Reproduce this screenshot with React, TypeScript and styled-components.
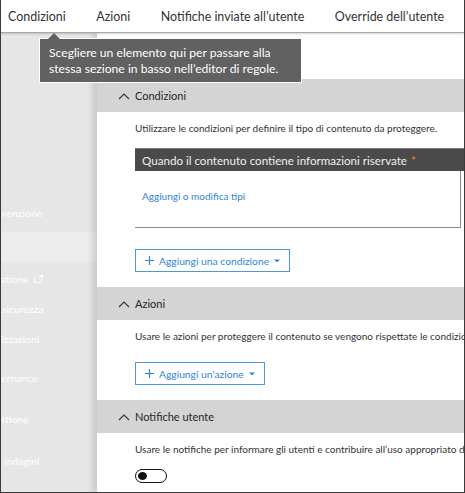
import React from "react";
import styled, { createGlobalStyle } from "styled-components";

const Global = createGlobalStyle`
  html, body { margin: 0; padding: 0; background: #fff; }
  body { font-family: Lato, "Open Sans", sans-serif; }
  * { box-sizing: border-box; }
`;

const Frame = styled.div`
  position: relative;
  width: 465px;
  height: 493px;
  border-left: 1px solid #3a3a3a;
  border-right: 1px solid #3a3a3a;
  border-bottom: 1px solid #3a3a3a;
  display: flex;
  flex-direction: column;
  overflow: hidden;
  background: #fff;
`;

const TabBar = styled.nav`
  height: 33px;
  flex: none;
  display: flex;
  align-items: center;
  gap: 30.5px;
  padding-left: 7px;
  border-bottom: 1px solid #a8a8a8;
  box-shadow: 0 1px 2px rgba(0, 0, 0, 0.18);
  position: relative;
  z-index: 2;
  background: #fff;
`;

const Tab = styled.span`
  font-size: 12.45px;
  color: #333;
  white-space: nowrap;
`;

const Body = styled.div`
  flex: 1;
  display: flex;
  min-height: 0;
`;

const Sidebar = styled.aside`
  width: 96px;
  flex: none;
  background: #e6e6e6;
  display: flex;
  flex-direction: column;
  padding-top: 165px;
  overflow: hidden;
`;

const NavItem = styled.div<{ $top: number; $active?: boolean }>`
  height: 30px;
  margin-top: ${(p) => p.$top}px;
  display: flex;
  align-items: center;
  background: ${(p) => (p.$active ? "#ececec" : "transparent")};
  color: #fff;
  font-size: 10.4px;
  white-space: nowrap;
`;

const NavText = styled.span<{ $shift: number }>`
  margin-left: ${(p) => p.$shift}px;
  display: inline-flex;
  align-items: center;
  gap: 5px;
`;

const Main = styled.main`
  flex: 1;
  min-width: 0;
  background: #fff;
  box-shadow: -4px 0 7px rgba(0, 0, 0, 0.14);
  padding-top: 46px;
  overflow: hidden;
  position: relative;
  z-index: 1;
`;

const SectionHeader = styled.div`
  height: 33px;
  background: #d4d4d4;
  display: flex;
  align-items: center;
  padding-left: 21px;
  gap: 5px;
  font-size: 11px;
  color: #262626;
`;

const Content = styled.div<{ $bottom: number }>`
  padding: 8px 0 ${(p) => p.$bottom}px 38px;
`;

const Desc = styled.div`
  font-size: 10px;
  line-height: 16px;
  color: #333;
  white-space: nowrap;
`;

const DarkField = styled.div`
  margin-top: 12px;
  width: 340px;
  height: 23px;
  background: #4a4a4a;
  border-top: 1px solid #7a7a7a;
  color: #f0f0f0;
  font-size: 11.6px;
  display: flex;
  align-items: center;
  padding-left: 7px;
  white-space: nowrap;
`;

const Asterisk = styled.span`
  color: #e8872c;
  margin-left: 4px;
`;

const FieldBody = styled.div`
  width: 326px;
  height: 57px;
  border-right: 1px solid #8a8a8a;
  border-bottom: 1px solid #8a8a8a;
  padding: 13px 0 0 7px;
`;

const Link = styled.a`
  font-size: 10px;
  line-height: 16px;
  color: #2f86d6;
  text-decoration: none;
`;

const AddButton = styled.button<{ $top: number }>`
  margin-top: ${(p) => p.$top}px;
  height: 23px;
  display: inline-flex;
  align-items: center;
  gap: 5px;
  padding: 0 9px 0 9px;
  background: #fff;
  border: 1px solid #4a98e0;
  color: #2f86d6;
  font-family: inherit;
  font-size: 10.3px;
  white-space: nowrap;
`;

const Toggle = styled.div`
  margin-top: 12px;
  width: 32px;
  height: 14px;
  border: 1.5px solid #111;
  border-radius: 7px;
  display: flex;
  align-items: center;
  padding-left: 2px;
`;

const Knob = styled.div`
  width: 9px;
  height: 8px;
  border-radius: 50%;
  background: #111;
`;

const Tooltip = styled.div`
  position: absolute;
  left: 38px;
  top: 38px;
  width: 263px;
  height: 45px;
  background: #616161;
  border: 1px solid #fff;
  color: #fff;
  font-size: 12.15px;
  line-height: 16px;
  padding: 6px 0 0 9px;
  white-space: nowrap;
  z-index: 5;

  &::before {
    content: "";
    position: absolute;
    left: 8px;
    top: -6px;
    border-left: 6px solid transparent;
    border-right: 6px solid transparent;
    border-bottom: 6px solid #616161;
  }
`;

const Chevron = () => (
  <svg width="12" height="8" viewBox="0 0 12 8">
    <polyline points="1,7 6,2 11,7" fill="none" stroke="#333" strokeWidth="1.1" />
  </svg>
);

const Plus = () => (
  <svg width="9" height="9" viewBox="0 0 9 9">
    <path d="M4.5 0 V9 M0 4.5 H9" stroke="#2f86d6" strokeWidth="1.2" />
  </svg>
);

const Caret = () => (
  <svg width="6" height="4" viewBox="0 0 6 4">
    <polygon points="0,0.5 6,0.5 3,3.5" fill="#2f86d6" />
  </svg>
);

const ExtIcon = () => (
  <svg width="9" height="8" viewBox="0 0 9 8">
    <path d="M0.5 2 V7.5 H7.5 V4.5 M4.5 0.5 H8.5 V3.5 M8.5 0.5 L5 4" fill="none" stroke="#fff" strokeWidth="1" />
  </svg>
);

const navItems = [
  { text: "evenzione", shift: -5, top: 0 },
  { text: "", shift: 0, top: 4, active: true },
  { text: "estione", shift: -6, top: 2, ext: true },
  { text: "sicurezza", shift: 1, top: 0 },
  { text: "izzazioni", shift: 0, top: 0 },
  { text: "ernance", shift: 0, top: 9 },
  { text: "estione", shift: -6, top: 11 },
  { text: "e indagini", shift: -5, top: 12 },
];

export default function App() {
  return (
    <>
      <Global />
      <Frame>
        <TabBar>
          <Tab>Condizioni</Tab>
          <Tab>Azioni</Tab>
          <Tab>Notifiche inviate all’utente</Tab>
          <Tab>Override dell’utente</Tab>
        </TabBar>
        <Body>
          <Sidebar>
            {navItems.map((n, i) => (
              <NavItem key={i} $top={n.top} $active={n.active}>
                <NavText $shift={n.shift}>
                  {n.text}
                  {n.ext && <ExtIcon />}
                </NavText>
              </NavItem>
            ))}
          </Sidebar>
          <Main>
            <SectionHeader>
              <Chevron />
              Condizioni
            </SectionHeader>
            <Content $bottom={15}>
              <Desc>Utilizzare le condizioni per definire il tipo di contenuto da proteggere.</Desc>
              <DarkField>
                Quando il contenuto contiene informazioni riservate
                <Asterisk>*</Asterisk>
              </DarkField>
              <FieldBody>
                <Link href="#">Aggiungi o modifica tipi</Link>
              </FieldBody>
              <AddButton $top={21}>
                <Plus />
                Aggiungi una condizione
                <Caret />
              </AddButton>
            </Content>
            <SectionHeader>
              <Chevron />
              Azioni
            </SectionHeader>
            <Content $bottom={15}>
              <Desc>Usare le azioni per proteggere il contenuto se vengono rispettate le condizioni.</Desc>
              <AddButton $top={18}>
                <Plus />
                Aggiungi un'azione
                <Caret />
              </AddButton>
            </Content>
            <SectionHeader>
              <Chevron />
              Notifiche utente
            </SectionHeader>
            <Content $bottom={10}>
              <Desc>Usare le notifiche per informare gli utenti e contribuire all’uso appropriato di contenuti.</Desc>
              <Toggle>
                <Knob />
              </Toggle>
            </Content>
          </Main>
        </Body>
        <Tooltip>
          Scegliere un elemento qui per passare alla
          <br />
          stessa sezione in basso nell’editor di regole.
        </Tooltip>
      </Frame>
    </>
  );
}
